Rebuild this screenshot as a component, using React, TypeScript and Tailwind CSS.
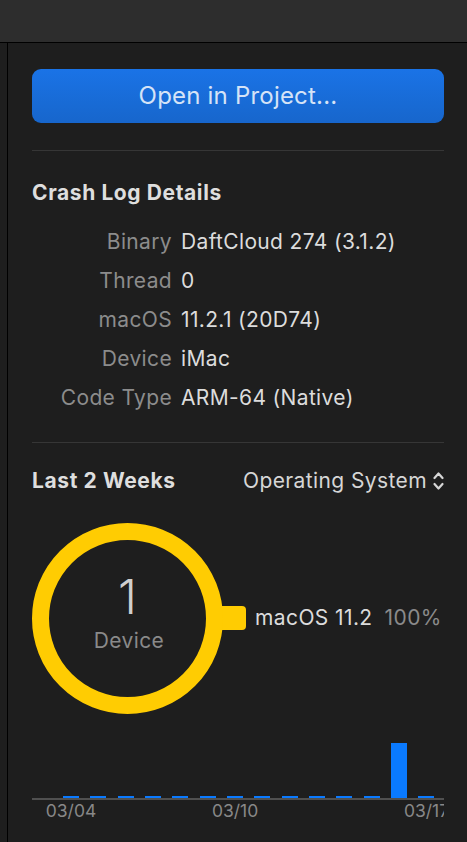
import React from "react";

const rows: [string, string][] = [
  ["Binary", "DaftCloud 274 (3.1.2)"],
  ["Thread", "0"],
  ["macOS", "11.2.1 (20D74)"],
  ["Device", "iMac"],
  ["Code Type", "ARM-64 (Native)"],
];

const bars = [2, 2, 2, 2, 2, 2, 2, 2, 2, 2, 2, 2, 55, 2];
const labels: Record<number, string> = { 0: "03/04", 6: "03/10", 13: "03/17" };

export default function App() {
  return (
    <div
      className="w-[467px] h-[842px] bg-[#1e1e1e] flex flex-col overflow-hidden"
      style={{ fontFamily: "Inter, 'Noto Sans', sans-serif" }}
    >
      <div className="h-[43px] shrink-0 bg-[#2d2d2d] border-b border-black" />
      <div className="flex flex-1 min-h-0">
        <div className="w-[8px] shrink-0 border-r border-black bg-[#1e1e1e]" />
        <div className="flex-1 pl-[24px] pr-[23px] flex flex-col">
          <button className="mt-[26px] h-[54px] rounded-[9px] bg-gradient-to-b from-[#1a73e6] to-[#1766cc] text-[#d5e3f7] text-[24px] tracking-[0.2px]">
            Open in Project...
          </button>
          <div className="mt-[27px] h-px bg-[#363636]" />
          <div className="mt-[30px] h-[24px] leading-[24px] text-[21px] font-bold tracking-[0.6px] text-[#dedede]">
            Crash Log Details
          </div>
          <div className="mt-[17px] flex flex-col">
            {rows.map(([k, v]) => (
              <div key={k} className="flex h-[39px] items-center text-[21px] tracking-[0.35px]">
                <div className="w-[140px] text-right text-[#8c8c8c]">{k}</div>
                <div className="ml-[9px] text-[#dcdcdc]">{v}</div>
              </div>
            ))}
          </div>
          <div className="mt-[25px] h-px bg-[#363636]" />
          <div className="mt-[26px] h-[24px] flex items-center justify-between">
            <div className="text-[21px] font-bold tracking-[0.6px] text-[#dedede]">Last 2 Weeks</div>
            <div className="flex items-center gap-[6px] text-[21px] tracking-[0.4px] text-[#d6d6d6]">
              <span>Operating System</span>
              <svg width="11" height="20" viewBox="0 0 11 20" fill="none" stroke="#d6d6d6" strokeWidth="2.2" strokeLinecap="round" strokeLinejoin="round">
                <path d="M1.5 7 L5.5 2.5 L9.5 7" />
                <path d="M1.5 13 L5.5 17.5 L9.5 13" />
              </svg>
            </div>
          </div>
          <div className="mt-[29px] flex items-start">
            <div className="relative w-[215px] h-[194px] shrink-0">
              <svg width="215" height="194" viewBox="0 0 215 194" className="absolute inset-0">
                <rect x="180" y="84" width="34" height="24" rx="4" fill="#ffcc02" />
                <circle cx="95.5" cy="96.5" r="87" fill="none" stroke="#ffcc02" strokeWidth="17" />
              </svg>
              <div className="absolute left-0 top-0 w-[191px] h-[194px] flex flex-col items-center justify-center">
                <div className="text-[48px] leading-[48px] font-light text-[#cfcfcf] mt-[-12px]">1</div>
                <div className="mt-[8px] text-[21px] leading-[24px] tracking-[0.4px] text-[#8a8a8a] ml-[3px]">Device</div>
              </div>
            </div>
            <div className="ml-[8px] mt-[84px] h-[24px] flex items-center text-[21px] tracking-[0.4px]">
              <span className="text-[#dcdcdc]">macOS 11.2</span>
              <span className="ml-[12px] text-[#8a8a8a]">100%</span>
            </div>
          </div>
          <div className="mt-[27px] relative overflow-hidden">
            <div className="h-[55px] flex items-end pl-[31px] gap-[11.35px]">
              {bars.map((h, i) => (
                <div key={i} className="w-[16px] bg-[#0a7aff]" style={{ height: h }} />
              ))}
            </div>
            <div className="h-[2px] bg-[#505050]" />
            <div className="h-[26px] flex pl-[31px] gap-[11.35px]">
              {bars.map((_, i) => (
                <div key={i} className="w-[16px] relative">
                  {labels[i] && (
                    <span className="absolute left-1/2 -translate-x-1/2 top-0 text-[17.5px] leading-[22px] text-[#888888] whitespace-nowrap">
                      {labels[i]}
                    </span>
                  )}
                </div>
              ))}
            </div>
          </div>
        </div>
      </div>
    </div>
  );
}
